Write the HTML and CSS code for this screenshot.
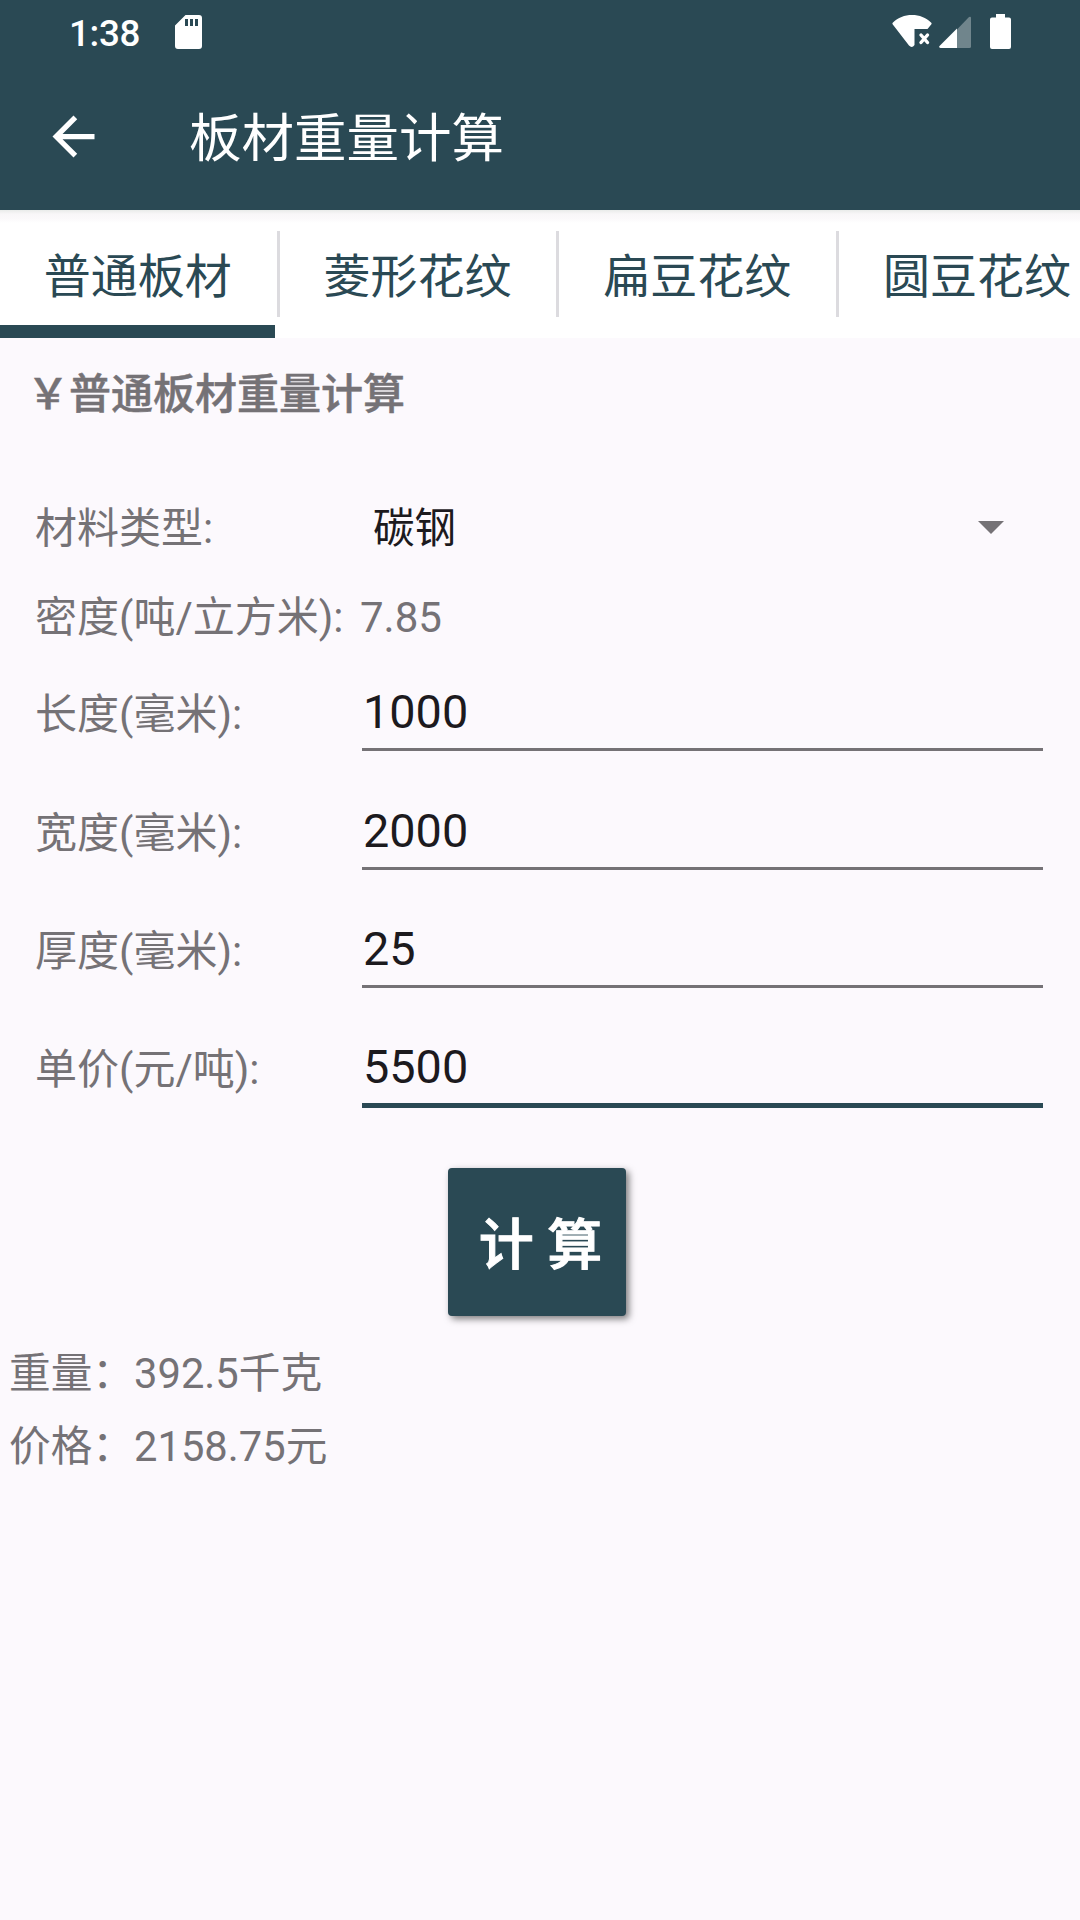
FILE: index.html
```html
<!DOCTYPE html>
<html lang="zh-CN">
<head>
<meta charset="utf-8">
<title>板材重量计算</title>
<link rel="stylesheet" href="styles.css">
</head>
<body>
<header class="top">
  <div class="status">
    <span class="clock">1:38</span>
    <svg class="sd" viewBox="0 0 27 34"><path fill="#fff" fill-rule="evenodd" d="M10.5 0H24a3 3 0 0 1 3 3v28a3 3 0 0 1-3 3H3a3 3 0 0 1-3-3V10.500zM10 4v7h3V4zm5 0v7h3V4zm5 0v7h3V4z"/></svg>
    <span class="spacer"></span>
    <svg class="wifi" viewBox="0 0 40 32"><path fill="#fff" d="M0.600 9.300Q0 8.300 1 7.500C6 2.500 12.500 0 20 0s14 2.500 19 7.500q1 .8.400 1.800L35.500 14H22.500V30Q20 33.500 17 30.500z"/><path d="M29 20l6.500 7.500m0-7.500l-6.500 7.500" stroke="#fff" stroke-width="3.400" stroke-linecap="round"/></svg>
    <svg class="signal" viewBox="0 0 32 32"><path fill="#fff" fill-opacity=".33" d="M18 13.500L30 1Q32 0 32 2V30.500Q32 32 30.500 32H18z"/><path fill="#fff" d="M18 12.500V32H1.500Q-1 31.500 1 29.500z"/></svg>
    <svg class="battery" viewBox="0 0 21 35"><path fill="#fff" d="M6 0h9v3.500h4q2 0 2 2V33q0 2-2 2H2q-2 0-2-2V5.500q0-2 2-2h4z"/></svg>
  </div>
  <div class="appbar">
    <svg class="back" viewBox="0 0 24 24"><path fill="#fff" d="M20 11H7.830l5.590-5.590L12 4l-8 8 8 8 1.410-1.410L7.830 13H20v-2z"/></svg>
    <h1 class="title">板材重量计算</h1>
  </div>
</header>
<nav class="tabs">
  <a class="tab active"><span>普通板材</span></a>
  <a class="tab"><span>菱形花纹</span></a>
  <a class="tab"><span>扁豆花纹</span></a>
  <a class="tab"><span>圆豆花纹</span></a>
</nav>
<main>
  <h2 class="heading">￥普通板材重量计算</h2>
  <div class="row material">
    <span class="label">材料类型:</span>
    <div class="select"><span>碳钢</span><svg class="caret" viewBox="0 0 26 13"><path fill="#757276" d="M0 0h26L13 13z"/></svg></div>
  </div>
  <div class="row density"><span class="label">密度(吨/立方米):</span><span class="value">7.85</span></div>
  <div class="row field"><label class="label">长度(毫米):</label><div class="input">1000</div></div>
  <div class="row field"><label class="label">宽度(毫米):</label><div class="input">2000</div></div>
  <div class="row field"><label class="label">厚度(毫米):</label><div class="input">25</div></div>
  <div class="row field"><label class="label">单价(元/吨):</label><div class="input focused">5500</div></div>
  <button class="calc">计 算</button>
  <div class="results">
    <p>重量：392.5千克</p>
    <p>价格：2158.75元</p>
  </div>
</main>
</body>
</html>
```
FILE: styles.css
```css
* { box-sizing: border-box; }
body {
  margin: 0;
  width: 1080px;
  height: 1920px;
  overflow: hidden;
  background: #fcf9fd;
  color: #757276;
  font-family: Roboto, "Noto Sans CJK SC", sans-serif;
  font-size: 42px;
  line-height: 60px;
}
h1, h2, p { margin: 0; font-weight: 400; }
svg { display: block; flex: none; }

.top { background: #2a4954; color: #fff; height: 210px; }
.status { display: flex; align-items: flex-start; height: 63px; padding: 0 69px; }
.clock { width: 106px; font-size: 36.750px; font-weight: 500; line-height: 43px; padding-top: 12px; letter-spacing: -.3px; }
.sd { width: 27px; height: 34px; margin-top: 15px; }
.spacer { flex: 1; }
.wifi { width: 40px; height: 32px; margin: 15px 7px 0 0; }
.signal { width: 32px; height: 32px; margin: 16px 19px 0 0; }
.battery { width: 21px; height: 35px; margin-top: 14px; }
.appbar { display: flex; align-items: center; height: 147px; padding-left: 42px; }
.back { width: 63px; height: 63px; margin-right: 84px; }
.title { padding-top: 4px; font-size: 52.500px; line-height: 76px; }

.tabs {
  display: flex;
  height: 128px;
  overflow: hidden;
  background: linear-gradient(#e9ebea, #f8f6f8 4px, #fbf9fb 9px, #fff 13px);
}
.tab {
  flex: none;
  display: grid;
  grid-template-columns: 276.700px 3px;
  grid-template-rows: 21px 86px 8px 13px;
  width: 279.700px;
  color: #2a4954;
  font-size: 47px;
}
.tab span { grid-area: 1 / 1 / 5 / 2; align-self: center; padding: 6px 1px 0 0; text-align: center; line-height: 68px; }
.tab::after { content: ""; grid-area: 2 / 2; background: #dcdbdf; }
.tab.active::before { content: ""; grid-area: 4 / 1; width: 275px; background: #2a4954; }

.heading { padding: 27px 0 0 27px; font-size: 42px; font-weight: 500; -webkit-text-stroke: .5px #757276; }
.row { display: flex; align-items: center; padding: 0 37px 0 35px; }
.label { width: 327px; flex: none; white-space: nowrap; }
.material { height: 90px; margin-top: 59px; }
.select { flex: 1; display: flex; justify-content: space-between; align-items: center; padding: 0 39px 0 11px; color: #1c1a1e; font-size: 41.500px; }
.caret { width: 26px; height: 13px; margin-bottom: 3px; }
.density { height: 74px; margin-top: 7px; }
.density .label { width: 325px; }
.field { height: 118.400px; }
.field .label { padding-top: 2px; }
.input {
  flex: 1;
  height: 74px;
  padding-left: 1px;
  border-bottom: 3px solid #757276;
  color: #1c1a1e;
  font-size: 46.800px;
  line-height: 71px;
}
.input.focused { height: 76px; margin-bottom: -2px; border-bottom: 5px solid #2a4954; }
.calc {
  display: block;
  width: 178px;
  height: 148px;
  margin: 39px 0 0 448px;
  padding: 6px 0 0 7px;
  border: 0;
  border-radius: 4px;
  background: #2a4954;
  box-shadow: 3px 3px 7px rgba(0, 0, 0, .5);
  color: #fff;
  font: 500 55px/80px Roboto, "Noto Sans CJK SC", sans-serif;
  -webkit-text-stroke: 1px #fff;
}
.results { padding: 21px 0 0 9px; font-size: 41.700px; }
.results p { line-height: 73.500px; }
```
